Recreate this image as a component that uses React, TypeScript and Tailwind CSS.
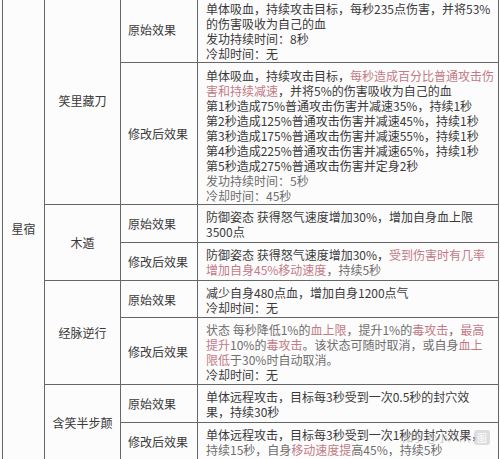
import React from 'react';

const Pk = ({ children }: { children: React.ReactNode }) => (
    <span className="text-[#c27a86]">{children}</span>
);

const Lt = ({ children }: { children: React.ReactNode }) => (
    <span className="text-[#6e6e6e]">{children}</span>
);

// pad: top/bottom padding of the effect cell, tuned so rows line up with the screenshot
type Row = { label: string; lines: React.ReactNode[]; pad: string };
type Group = { name: string; rows: Row[] };

const groups: Group[] = [
    {
        name: '笑里藏刀',
        rows: [
            {
                label: '原始效果',
                pad: 'pt-[5px] pb-[1px]',
                lines: [
                    '单体吸血，持续攻击目标，每秒235点伤害，并将53%',
                    '的伤害吸收为自己的血',
                    '发功持续时间：8秒',
                    '冷却时间：无',
                ],
            },
            {
                label: '修改后效果',
                pad: 'pt-[5px] pb-[1px]',
                lines: [
                    <>单体吸血，持续攻击目标，<Pk>每秒造成百分比普通攻击伤</Pk></>,
                    <><Pk>害和持续减速</Pk>，并将5%的伤害吸收为自己的血</>,
                    '第1秒造成75%普通攻击伤害并减速35%，持续1秒',
                    '第2秒造成125%普通攻击伤害并减速45%，持续1秒',
                    '第3秒造成175%普通攻击伤害并减速55%，持续1秒',
                    '第4秒造成225%普通攻击伤害并减速65%，持续1秒',
                    '第5秒造成275%普通攻击伤害并定身2秒',
                    <Lt>发功持续时间：5秒</Lt>,
                    <Lt>冷却时间：45秒</Lt>,
                ],
            },
        ],
    },
    {
        name: '木遁',
        rows: [
            {
                label: '原始效果',
                pad: 'pt-[4px] pb-[3px]',
                lines: ['防御姿态 获得怒气速度增加30%，增加自身血上限', '3500点'],
            },
            {
                label: '修改后效果',
                pad: 'pt-[4px] pb-[3px]',
                lines: [
                    <>防御姿态 获得怒气速度增加30%，<Pk>受到伤害时有几率</Pk></>,
                    <><Pk>增加自身45%移动速度</Pk><Lt>，持续5秒</Lt></>,
                ],
            },
        ],
    },
    {
        name: '经脉逆行',
        rows: [
            {
                label: '原始效果',
                pad: 'pt-[4px] pb-[2px]',
                lines: ['减少自身480点血，增加自身1200点气', '冷却时间：无'],
            },
            {
                label: '修改后效果',
                pad: 'pt-[4px] pb-[2px]',
                lines: [
                    <><Lt>状态 每秒降低1%的</Lt><Pk>血上限</Pk><Lt>，提升1%的</Lt><Pk>毒攻击</Pk><Lt>，</Lt><Pk>最高</Pk></>,
                    <><Pk>提升</Pk><Lt>10%的</Lt><Pk>毒攻击</Pk><Lt>。该状态可随时取消，或自身</Lt><Pk>血上</Pk></>,
                    <><Pk>限低</Pk><Lt>于30%时自动取消。</Lt></>,
                    '冷却时间：无',
                ],
            },
        ],
    },
    {
        name: '含笑半步颠',
        rows: [
            {
                label: '原始效果',
                pad: 'pt-[4px] pb-[3px]',
                lines: ['单体远程攻击，目标每3秒受到一次0.5秒的封穴效', '果，持续30秒'],
            },
            {
                label: '修改后效果',
                pad: 'pt-[4px] pb-[3px]',
                lines: [
                    '单体远程攻击，目标每3秒受到一次1秒的封穴效果，',
                    <><Lt>持续15秒，自身</Lt><Pk>移动速度提</Pk><Lt>高45%，持续5秒</Lt></>,
                ],
            },
        ],
    },
];

const total = groups.reduce((n, g) => n + g.rows.length, 0);

export default function App() {
    return (
        <div
            className="relative w-[500px] h-[459px] overflow-hidden bg-[#fdfcfc] text-[#3a3a3a] text-[12px] leading-[15px]"
            style={{ fontFamily: '"Noto Sans CJK SC", "Noto Sans", sans-serif' }}
        >
            <table className="mt-[-5px] ml-[2px] w-[497px] table-fixed border-collapse">
                <colgroup>
                    <col className="w-[42px]" />
                    <col className="w-[76px]" />
                    <col className="w-[77px]" />
                    <col />
                </colgroup>
                <tbody>
                    {groups.map((g, gi) =>
                        g.rows.map((r, ri) => (
                            <tr key={`${gi}-${ri}`}>
                                {gi === 0 && ri === 0 && (
                                    <td rowSpan={total} className="border border-[#666] p-0 text-center align-middle">
                                        星宿
                                    </td>
                                )}
                                {ri === 0 && (
                                    <td rowSpan={g.rows.length} className="border border-[#666] p-0 text-center align-middle">
                                        {g.name}
                                    </td>
                                )}
                                <td className="border border-[#666] p-0 pl-[7px] align-middle whitespace-nowrap">
                                    {r.label}
                                </td>
                                <td className={`border border-[#666] pl-[8px] pr-0 align-top ${r.pad}`}>
                                    {r.lines.map((l, li) => (
                                        <div key={li} className="h-[15px] whitespace-nowrap">
                                            {l}
                                        </div>
                                    ))}
                                </td>
                            </tr>
                        ))
                    )}
                </tbody>
            </table>

            {/* watermark */}
            <div className="absolute right-[10px] bottom-[14px] flex items-center gap-1 text-[11px] text-[#9a9a9a] opacity-60">
                <span>知乎 @小八爪</span>
                <span className="rounded-[3px] bg-[#c9c9c9] px-[3px] text-[10px] text-white">图</span>
            </div>
        </div>
    );
}
